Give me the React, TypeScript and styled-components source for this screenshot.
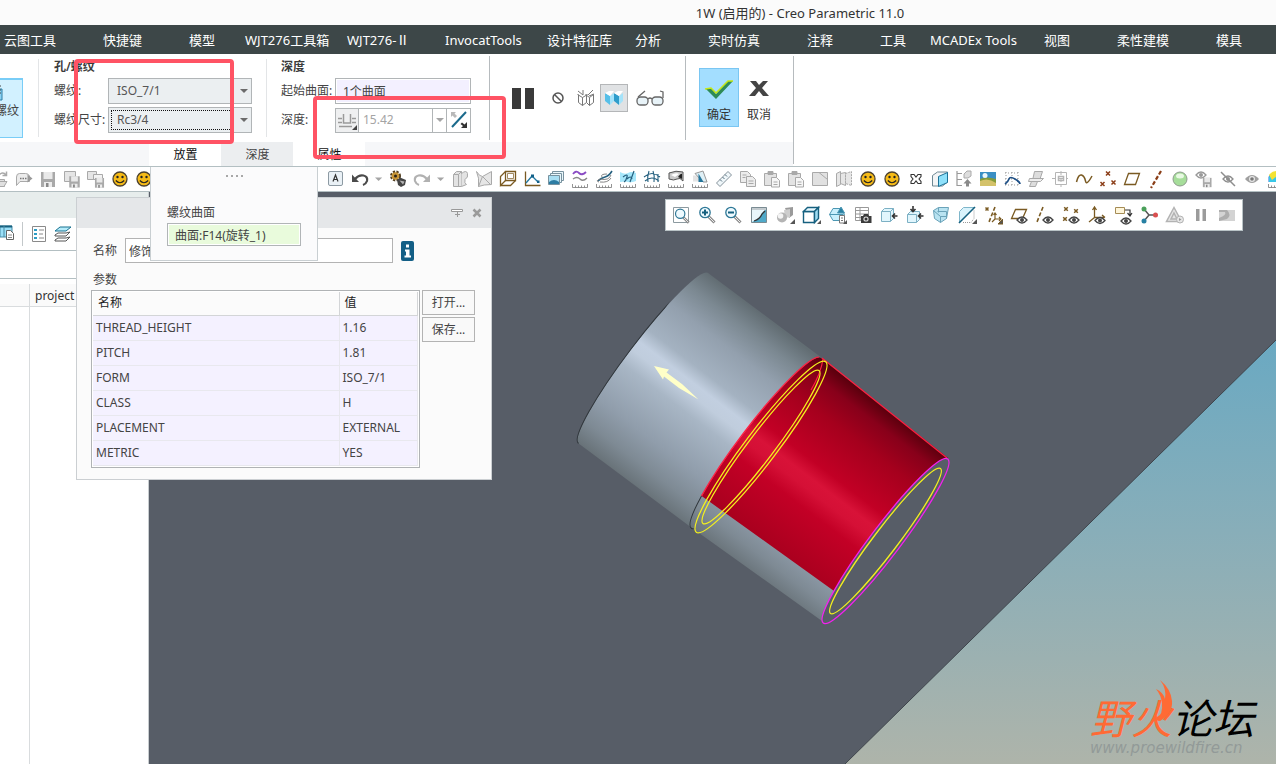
import React from 'react';
import styled, { createGlobalStyle, css } from 'styled-components';

const GlobalStyle = createGlobalStyle`
  * { box-sizing: border-box; }
  body { margin: 0; }
  body, button, input, select, table {
    font-family: 'Noto Sans', 'Noto Sans CJK SC', sans-serif;
    font-size: 12px;
    line-height: 16px;
    color: #444;
  }
  button { padding: 0; border: 0; background: none; cursor: pointer; }
  svg { display: block; flex: none; }
`;

/* ---------- page frame ---------- */

const Page = styled.div`
  position: relative;
  display: flex;
  flex-direction: column;
  min-height: 100vh;
  overflow: hidden;
  background: #fff;
`;

const TitleBar = styled.header`
  height: 25px;
  padding-left: 324px;
  background: #fbfbfb;
  color: #333;
  font-size: 13px;
  line-height: 26px;
  text-align: center;
`;

const MenuBar = styled.nav`
  display: grid;
  grid-template-columns: 99fr 86fr 56fr 102fr 98fr 102fr 88fr 73fr 99fr 73fr 50fr 114fr 73fr 99fr 60fr;
  height: 29px;
  padding-left: 4px;
  background: #3d4748;
`;

const MenuItem = styled.a`
  color: #fff;
  font-size: 13px;
  line-height: 30px;
  text-decoration: none;
  white-space: nowrap;
`;

/* ---------- ribbon ---------- */

const Ribbon = styled.section`
  display: flex;
  border-bottom: 1px solid #b3bfc2;
`;

const RibbonMain = styled.div`
  display: flex;
  flex-direction: column;
`;

const Groups = styled.div`
  display: flex;
  height: 88px;
`;

const Divider = styled.div<{ $soft?: boolean }>`
  width: 1px;
  margin: ${p => (p.$soft ? '5px 0' : '2px 0')};
  background: ${p => (p.$soft ? '#e3e5e7' : '#b6bbbe')};
`;

const ThreadGroup = styled.div`
  width: 38px;
  padding-top: 24px;
`;

const ThreadButton = styled.button`
  display: flex;
  flex-direction: column;
  align-items: flex-end;
  gap: 2px;
  width: 23px;
  height: 60px;
  padding: 5px 3px 0 0;
  overflow: hidden;
  border: 1px solid #79cdf7;
  border-width: 2px 1px 1px 0;
  background: #d2f1ff;
  white-space: nowrap;
  svg { margin-right: 16px; }
`;

const FieldGroup = styled.div<{ $field: number; $left: number; $right: number }>`
  display: grid;
  grid-template-columns: 54px ${p => p.$field}px;
  grid-template-rows: 17px 26px 26px;
  row-gap: 3px;
  align-content: start;
  align-items: center;
  padding: 4px ${p => p.$right}px 0 ${p => p.$left}px;
  white-space: nowrap;
`;

const GroupTitle = styled.h2`
  grid-column: 1 / -1;
  margin: 0;
  font-size: 12px;
  font-weight: 600;
  line-height: 16px;
  color: #3c3c3c;
`;

const SelectBox = styled.div<{ $focused?: boolean }>`
  position: relative;
  height: 26px;
  select {
    width: 100%;
    height: 100%;
    padding: 0 24px 0 8px;
    appearance: none;
    border: 1px solid #b1b5b7;
    border-radius: 0;
    background: #ebeff1;
    color: #555;
  }
  svg { position: absolute; right: 4px; top: 11px; pointer-events: none; }
  &::after {
    content: '';
    position: absolute;
    inset: 3px 18px 3px 3px;
    pointer-events: none;
    border: ${p => (p.$focused ? '1px dotted #111' : '0')};
  }
`;

const PickInput = styled.input<{ $picked?: boolean }>`
  width: 100%;
  height: ${p => (p.$picked ? 23 : 26)}px;
  padding: 0 7px;
  border: 1px solid #b1b5b7;
  border-radius: 0;
  background: ${p => (p.$picked ? '#e9fbdc' : '#f3f0ff')};
  box-shadow: inset 0 0 0 1px #fff;
  outline: 0;
`;

const DepthBox = styled.div`
  display: grid;
  grid-template-columns: 23px 1fr 14px 23px;
  height: 25px;
  border: 1px solid #b1b5b7;
  button, input { border: 0; border-right: 1px solid #b1b5b7; border-radius: 0; }
  button { display: flex; align-items: center; justify-content: center; }
  button:first-child { background: #eff0f1; }
  button:last-child { border-right: 0; }
  input { width: 100%; min-width: 0; padding: 0 4px; background: #fff; color: #a4a4a4; }
`;

const Controls = styled.div`
  display: flex;
  align-items: center;
  padding: 0 21px 0 19px;
`;

const ControlButton = styled.button<{ $on?: boolean; $gap?: number }>`
  display: flex;
  align-items: center;
  justify-content: center;
  width: 28px;
  height: 28px;
  margin-right: ${p => p.$gap ?? 0}px;
  ${p => p.$on && css`border: 1px solid #b4b6b8; background: #e0e2e4;`}
`;

const Confirm = styled.div`
  display: flex;
  padding: 14px 14px 0 13px;
`;

const ConfirmButton = styled.button<{ $primary?: boolean }>`
  display: flex;
  flex-direction: column;
  align-items: center;
  gap: 6px;
  width: 40px;
  height: 59px;
  padding-top: 6px;
  border: 1px solid ${p => (p.$primary ? '#7ac6f2' : 'transparent')};
  background: ${p => (p.$primary ? '#a3deff' : 'transparent')};
  color: #333;
`;

const TabStrip = styled.div`
  display: flex;
  height: 24px;
  padding-left: 149px;
  background: #f6f7f9;
`;

const StripTab = styled.button<{ $shade?: boolean }>`
  width: 72px;
  padding: 2px 0 0 1px;
  background: ${p => (p.$shade ? '#eceef0' : '#fff')};
  color: ${p => (p.$shade ? '#444' : '#111')};
`;

/* ---------- icon rows ---------- */

const ToolRow = styled.div`
  display: flex;
  height: 25px;
  margin-left: -12px;
  overflow: hidden;
  border-bottom: 1px solid #b3bfc2;
`;

const ToolButton = styled.button<{ $w?: number }>`
  display: flex;
  flex: none;
  align-items: center;
  justify-content: center;
  width: ${p => p.$w ?? 24}px;
  height: 24px;
`;

const RowGap = styled.div`
  flex: none;
  width: 168px;
`;

/* ---------- workspace ---------- */

const Workspace = styled.main`
  display: flex;
  flex: 1;
`;

const TreePanel = styled.aside`
  display: flex;
  flex-direction: column;
  width: 149px;
  border-right: 1px solid #c8cdd0;
`;

const TreeHead = styled.div`
  height: 26px;
  background: #e7edec;
`;

const TreeTools = styled.div`
  display: flex;
  align-items: center;
  gap: 6px;
  height: 33px;
  border-bottom: 1px solid #b3bfc2;
`;

const TreeFilter = styled.div`
  height: 28px;
  border-bottom: 1px solid #b3bfc2;
`;

const TreeBody = styled.div`
  display: grid;
  grid-template-columns: 30px 1fr;
  grid-template-rows: 23px 1fr;
  flex: 1;
  margin-top: 5px;
`;

const TreeCell = styled.div<{ $head?: boolean; $line?: boolean }>`
  padding-left: 5px;
  border-right: ${p => (p.$line ? '1px solid #d9dcde' : '0')};
  border-bottom: ${p => (p.$head ? '1px solid #d9dcde' : '0')};
  background: ${p => (p.$head ? '#fafafa' : '#fff')};
  color: #333;
  font-size: 12px;
  line-height: 24px;
`;

const Canvas = styled.section`
  position: relative;
  flex: 1;
  background: #575d67;
`;

const Scene = styled.svg`
  position: absolute;
  inset: 0;
  width: 100%;
  height: 100%;
`;

const FloatBar = styled.div`
  position: absolute;
  top: 7px;
  right: 33px;
  display: flex;
  align-items: center;
  height: 32px;
  padding: 0 2px;
  border: 1px solid #b9c3c6;
  background: #fff;
`;

const Watermark = styled.div`
  position: absolute;
  right: 18px;
  bottom: 8px;
  width: 168px;
`;

const MarkName = styled.div`
  font-family: 'Noto Sans CJK SC', sans-serif;
  font-size: 41px;
  font-style: italic;
  font-weight: 400;
  line-height: 48px;
  color: #000;
  em { color: #ff6a35; }
`;

const MarkSite = styled.div`
  font-family: 'DejaVu Sans', sans-serif;
  font-size: 15px;
  font-style: italic;
  line-height: 16px;
  color: #929a98;
`;

const Flame = styled.svg`
  position: absolute;
  left: 64px;
  top: -13px;
`;

/* ---------- popup and dialog ---------- */

const Popup = styled.div`
  position: absolute;
  left: 150px;
  top: 167px;
  z-index: 3;
  width: 168px;
  height: 94px;
  padding: 0 16px;
  border: 1px solid #c9cfd2;
  border-top: 0;
  background: #fbfbfc;
  label { display: block; line-height: 20px; }
`;

const Grip = styled.div`
  display: flex;
  justify-content: center;
  gap: 3px;
  height: 36px;
  padding-top: 8px;
  i { width: 2px; height: 2px; background: #a8a8a8; }
`;

const Dialog = styled.section`
  position: absolute;
  left: 76px;
  top: 197px;
  z-index: 2;
  width: 416px;
  border: 1px solid #cbcfd2;
  background: #fbfbfb;
`;

const DialogHead = styled.header`
  display: flex;
  justify-content: flex-end;
  align-items: center;
  gap: 7px;
  height: 30px;
  padding-right: 8px;
  background: #e5e7e9;
`;

const DialogBody = styled.div`
  padding: 10px 14px 11px;
`;

const NameRow = styled.div`
  display: flex;
  align-items: center;
  padding-left: 2px;
  label { width: 32px; }
  input { width: 268px; height: 25px; margin-right: 8px; padding: 0 3px; border: 1px solid #b3b3b3; background: #fff; }
`;

const ParamTitle = styled.div`
  padding: 9px 2px 2px;
`;

const ParamArea = styled.div`
  display: flex;
  align-items: flex-start;
  gap: 2px;
`;

const TableFrame = styled.div`
  width: 329px;
  padding: 1px;
  border: 1px solid #b0b3b5;
  background: #fff;
`;

const ParamTable = styled.table`
  width: 100%;
  border-collapse: collapse;
  table-layout: fixed;
  th, td { height: 25px; padding: 0 3px; text-align: left; font-weight: 400; border-right: 1px solid #e8e8ee; border-bottom: 1px solid #e8e8ee; }
  th { height: 23px; padding: 0 5px; background: #fbfbfb; color: #222; border-color: #d3d5d7; }
  td { background: #f4f1ff; }
  th:first-child { width: 246px; }
`;

const SideButtons = styled.div`
  display: flex;
  flex-direction: column;
  gap: 2px;
`;

const SideButton = styled.button`
  width: 53px;
  height: 25px;
  border: 1px solid #b3b3b3;
  background: #f9f9f9;
`;

const Highlight = styled.div<{ $x: number; $y: number; $w: number; $h: number }>`
  position: absolute;
  left: ${p => p.$x}px;
  top: ${p => p.$y}px;
  z-index: 4;
  width: ${p => p.$w}px;
  height: ${p => p.$h}px;
  border: 4px solid #ff5364;
  border-radius: 4px;
  pointer-events: none;
`;

/* ---------- icon drawings ---------- */

const G = '#a9a9a9';
const BR = '#7a5a22';
const BL = '#16607f';

const Eye = ({ x = 11, y = 15, c = '#444' }) => (
  <g>
    <path d={`M${x - 5} ${y}q5 -6 10 0q-5 6 -10 0z`} fill="#fff" stroke={c} strokeWidth="1.3" />
    <circle cx={x} cy={y} r="2" fill={c} />
  </g>
);
const Ruler = () => <path d="M2.500 15v3.500h15V15M5.500 16.500v2M8.500 16.500v2M11.500 16.500v2M14.500 16.500v2" fill="none" stroke="#777" strokeWidth=".8" />;
const Caret = ({ c = '#8a8a8a' }) => <path d="M5 8h9l-4.500 4.500z" fill={c} />;
const Corner = () => <path d="M20 14v5h-5z" fill="#555" />;
const Floppy = ({ x = 0, y = 0, s = 1 }) => (
  <g transform={`translate(${x} ${y}) scale(${s})`}>
    <path d="M3 3h14v15H3z" fill={G} />
    <path d="M5.500 3h9v7h-9z" fill="#e9e9e9" />
    <path d="M6 13h8v5H6z" fill="#ececec" />
    <path d="M8 14h2.500v4H8z" fill="#888" />
  </g>
);
const Smile = (
  <g>
    <circle cx="10" cy="10" r="7" fill="#f6bb17" stroke="#4b4130" strokeWidth="1.300" />
    <circle cx="7.500" cy="8" r="1.200" fill="#222" />
    <circle cx="12.500" cy="8" r="1.200" fill="#222" />
    <path d="M5.800 11.500q4.200 4.500 8.400 0" fill="none" stroke="#222" strokeWidth="1.200" />
  </g>
);
const Sheet = (
  <g fill="#ececec" stroke={G}>
    <path d="M2.500 2.500h7l3 3v8h-10z" />
    <path d="M8.500 7.500h6l3 3v7h-9z" />
    <path d="M4.500 6h4M4.500 8.500h3M10.500 12h5M10.500 14.500h5" />
  </g>
);
const Clip = (
  <g fill="#e3e3e3" stroke={G}>
    <path d="M2.500 4.500h12v12h-12z" />
    <path d="M6 2.500h5v3H6z" fill={G} />
    <path d="M9.500 8.500h5l3 3v6.500h-8z" fill="#f6f6f6" />
    <path d="M11.500 13h4M11.500 15.500h4" />
  </g>
);
const Lens = ({ plus = false, minus = false }) => (
  <g fill="none">
    <path d="M11.500 11.500l6 6" stroke="#8b8b8b" strokeWidth="3" />
    <path d="M12 12l5 5" stroke="#eee" />
    <circle cx="8" cy="7.500" r="5.200" fill="#eefaff" stroke="#2d7796" strokeWidth="1.300" />
    {(plus || minus) && <path d="M5 7.500h6" stroke={BL} strokeWidth="2" />}
    {plus && <path d="M8 4.500v6" stroke={BL} strokeWidth="2" />}
  </g>
);
const Cross = ({ x, y, c = '#8b3d17', r = 2 }: { x: number; y: number; c?: string; r?: number }) => (
  <path d={`M${x - r} ${y - r}l${2 * r} ${2 * r}M${x + r} ${y - r}l${-2 * r} ${2 * r}`} stroke={c} strokeWidth="1.500" />
);

const icons: Record<string, React.ReactNode> = {
  open: <g fill="#e0e0e0" stroke={G}><path d="M1.500 17.500v-9h5l2 2h6v7z" /><path d="M2 17.500l3-5h12l-3 5z" /><path d="M9 6q4-4 7 0M16.500 2.500v4h-4" fill="none" strokeWidth="1.500" /></g>,
  send: <g fill="#ececec" stroke={G}><path d="M2.500 16.500V8q0-3.500 3-3.500h6q3 0 4 2.500v5.500h-9.500z" /><path d="M6 9.500h7" stroke="#777" strokeWidth="1.600" strokeDasharray="1.500 1" /><path d="M13.500 5.500l5 4-5 4z" fill="#999" stroke="none" /></g>,
  save: <Floppy />,
  saveAs: <g><path d="M2.500 2.500h11v10h-11z" fill="#e5e5e5" stroke={G} /><Floppy x={5} y={5} s={0.75} /></g>,
  saveCopy: <g><path d="M1.500 2.500h9v8h-9z" fill="#e5e5e5" stroke={G} /><path d="M7.500 5.500h9v5h-9z" fill="#f3f3f3" stroke={G} /><Floppy x={7} y={7} s={0.65} /></g>,
  smile: Smile,
  letter: <g><rect x="2.500" y="2.500" width="14" height="14" rx="1.500" fill="#eaf1f6" stroke="#8d9aa3" /><path d="M7 12.500l2.500-6.500 2.500 6.500M8 10.500h3" fill="none" stroke="#333" strokeWidth="1.200" /></g>,
  undo: <g><path d="M5 10Q9 5.500 13.500 6.500t3.500 5.500q-1 3-4 4" fill="none" stroke="#4b4b4b" strokeWidth="2.200" /><path d="M2 5.500V13h7z" fill="#4b4b4b" /></g>,
  redo: <g transform="matrix(-1 0 0 1 20 0)"><path d="M5 10Q9 5.500 13.500 6.500t3.500 5.500q-1 3-4 4" fill="none" stroke="#b1b1b1" strokeWidth="2.200" /><path d="M2 5.500V13h7z" fill="#b1b1b1" /></g>,
  caret: <Caret c="#a5a5a5" />,
  gears: <g><circle cx="7.500" cy="7" r="4" fill="none" stroke="#503c1d" strokeWidth="3" strokeDasharray="2 1.200" /><circle cx="7.500" cy="7" r="3.800" fill="#c89536" /><circle cx="7.500" cy="7" r="1.500" fill="#2d2417" /><path d="M9 11l3-2.500 6 2.500-1 5-4 2-3-2z" fill="#444" /><path d="M11.500 11.500l5 1-1.500 3z" fill="#b5b5b5" /></g>,
  block: <g fill="#e3e3e3" stroke={G}><path d="M3.500 5.500l3-3h5v15h-8z" /><path d="M3.500 5.500h5v12M8.500 5.500l3-3" /><path d="M11.500 4.500q5-4 6 0t-2.500 6q-1 4 1.500 5l-5 2" /></g>,
  sheetCut: <g fill="#e6e6e6" stroke={G}><path d="M2.500 2.500q3 5 6 5l9-5v13q-8 0-13 2 1-9-2-15z" /><path d="M4.500 17.500l4-10 8 8" fill="none" /></g>,
  frame: <g fill="none" stroke={BR} strokeWidth="1.300"><path d="M7.500 2.500h10v9h-10z" /><path d="M7.500 2.500l-5 5v9l5-5M2.500 16.500h10l5-5" /><path d="M9.500 4.500h6v5h-6z" strokeWidth=".7" /></g>,
  graph: <g fill="none"><path d="M3.500 2.500v14h15" stroke={BR} strokeWidth="1.300" /><path d="M4 14l6-7 6 6" stroke="#2277a0" strokeWidth="1.300" /><path d="M9 5.500h3v3H9zM15 11.500h2.500V14H15z" fill="#126189" /></g>,
  images: <g stroke="#78929f"><path d="M6.500 2.500h11v9h-11z" fill="#eaf7fb" /><path d="M4.500 4.500h11v9h-11z" fill="#eaf7fb" /><path d="M2.500 6.500h11v9h-11z" fill="#a8dff3" /><path d="M3 13q5-4 10 0v2H3z" fill="#2d7ca3" stroke="none" /></g>,
  waves: <g fill="none"><path d="M3 5q3-4 6-1t7-1" stroke="#8a4cc4" strokeWidth="1.800" /><path d="M3 10q4-3 7 0t7-1" stroke="#888" strokeWidth="1.300" /><Ruler /></g>,
  curveA: <g fill="none"><path d="M4 12q3-3 7-4t7-6" stroke="#25607f" strokeWidth="1.600" /><path d="M5 13q-4-1 1-3 9 2 11-4M8 8q-2-3 5-3M6 13q8 1 11-4" stroke="#777" strokeWidth=".9" /><Ruler /></g>,
  curveB: <g fill="none"><path d="M2 3q5 3 8 1t8 0v8q-5 2-8 1t-8 0z" fill="#a6e7fb" /><path d="M5 8q5-4 4 0t-3 5M9 10q4-4 5 0M12 13l4-11" stroke="#25607f" strokeWidth="1.200" /><Ruler /></g>,
  grid: <g fill="none" stroke="#25607f" strokeWidth="1.100"><path d="M2 8q8-7 16 0M3 12q7-6 14 0M7 2q-2 6-1 11M11 2q2 5 1 11M16 5v8" /><Ruler /></g>,
  shade: <g><path d="M3 4q7-3 14-1v9q-3-4-6-2t-8 0z" fill="#c9c9c9" stroke="#555" /><path d="M5 6q5-3 8-1l-4 3z" fill="#fff" /><path d="M12 8q3-4 4-3v5z" fill="#222" /><Ruler /></g>,
  prism: <g><path d="M3 6.500h7v6H3z" fill="#e3e3e3" /><path d="M5 4.500l8-2.500 4 11h-4z" fill="#dff0f6" stroke="#999" /><path d="M8.500 13V4.500L13.500 13z" fill="#24749a" /><Ruler /></g>,
  ruler: <g><path d="M2.500 14L14 2.500l3.500 3.500L6 17.500z" fill="#f0f7fa" stroke="#84919a" /><path d="M6 10.500l2 2M8.500 8l2 2M11 5.500l2 2" stroke="#56707f" /></g>,
  copy: Sheet,
  paste: Clip,
  pasteSp: Clip,
  square: <g><path d="M2.500 3.500h15v13h-15z" fill="#e1e1e1" stroke={G} /><path d="M9 3.500l8.500 7" stroke={G} /></g>,
  pages: <g fill="#e6e6e6" stroke={G}><path d="M2.500 4.500l4-2v13l-4 2z" /><path d="M6.500 4.500l5-1v13l-5-2z" /><path d="M11.500 4.500l6-2v14l-6-2z" strokeDasharray="2 1" /></g>,
  xx: <path d="M5 5.500h3l2 2.500 2-2.500h3v2l-2 2.500 2 2.500v2h-3l-2-2.500-2 2.500H5v-2L7 10 5 7.500z" fill="#fff" stroke="#333" strokeWidth="1.100" />,
  slab: <g stroke="#6e8894"><path d="M2.500 6.500l5-3.500h10v10l-5 4h-10z" fill="#f3f5f6" /><path d="M8.500 7.500l9-4v10l-9 4z" fill="#8fe1fb" stroke="#1d7298" /></g>,
  tree: <g><path d="M3 2v15M3 4.500h5M3 10.500h5M3 16.500h5" stroke="#999" strokeWidth="1.200" /><path d="M10 5l3-3h4v5l-3 2h-4z" fill="#ddd" stroke="#aaa" /><path d="M13.500 10l4 4.500h-2.500v3h-3v-3H9.500z" fill="#8a8a8a" /></g>,
  photo: <g><path d="M2 3h16v14H2z" fill="#3a8fc4" /><path d="M2 10q6-3 16 0v7H2z" fill="#849b3a" /><path d="M2 12q8-4 16 2v3H2z" fill="#d4c26a" /><circle cx="7" cy="6.500" r="2.500" fill="#eaf6fb" /></g>,
  spline: <g fill="none"><path d="M3 4h14M3 10h14M3 16h14M4 3v14M10 3v14M16 3v14" stroke="#999" strokeDasharray="1 2" /><path d="M3 15q3-2 4-5t6 0 5 5" stroke="#1d4f86" strokeWidth="1.700" /></g>,
  stack: <g fill="#ddd" stroke={G}><path d="M8.500 2.500h8l-3 9h-7z" /><path d="M3.500 9.500h14l-3 3h-12z" fill="#eee" /><path d="M5.500 12.500h6l-2 5h-6z" /></g>,
  crop: <g fill="none" stroke="#b5b5b5"><path d="M5.500 3.500h11v12h-11z" /><path d="M8.500 7.500h5v4h-5z" strokeWidth="1.500" /><path d="M2 9.500h16M11 2v16" strokeDasharray="4 3" /></g>,
  sine: <path d="M2.500 13q2-8 5-7t4 6 6.500-5" fill="none" stroke={BR} strokeWidth="1.500" />,
  points: <g fill="none"><Cross x={10} y={4.5} /><Cross x={4.5} y={15} /><Cross x={15.5} y={13.5} /></g>,
  plane: <path d="M6.500 4.500h11l-4 11h-11z" fill="none" stroke={BR} strokeWidth="1.300" />,
  axis: <path d="M15 2L5 19" stroke="#8a3d16" strokeWidth="2.200" strokeDasharray="4 2" />,
  ball: <g><circle cx="10" cy="10" r="7" fill="#a6dd9a" stroke="#8e9b8d" /><ellipse cx="10" cy="7" rx="4" ry="2.500" fill="#e8f9e3" /></g>,
  eyeSave: <g><Eye x={7} y={6} c="#999" /><Floppy x={7} y={7} s={0.62} /></g>,
  eyeOff: <g><Eye x={10} y={10} c="#8e8e8e" /><path d="M3 3l14 14" stroke="#8e8e8e" strokeWidth="1.500" /></g>,
  eye: <g><path d="M3 10q7-8 14 0-7 8-14 0z" fill="#a0a0a0" /><circle cx="10" cy="10" r="3" fill="#e6e6e6" /><circle cx="10" cy="10" r="1.800" fill="#777" /></g>,
  rainbow: <g><path d="M2.500 13V8q2-6 14-5v10z" fill="#2b6fe0" /><path d="M3 13V8q3-5 8-5v10z" fill="#39c8e8" /><path d="M3 6q3-4 8-4l1 4-6 5z" fill="#f3e233" /><Ruler /></g>,

  zoomFit: <g><path d="M2.500 2.500h15v15h-15z" fill="#fff" stroke="#8c9aa0" /><g transform="translate(2 2) scale(.9)"><Lens /></g></g>,
  zoomIn: <Lens plus />,
  zoomOut: <Lens minus />,
  repaint: <g><path d="M2.500 2.500h15v15h-15z" fill="#4fa9c9" stroke="#7a8b92" /><path d="M3 5h13l-3 3q-2 6-10 9z" fill="#e8f6fb" /><path d="M3 3h14v2H3z" fill="#c3cbcf" /><path d="M16 6l-3 3q-2 5-8 7" fill="none" stroke="#333" strokeWidth="1.300" /></g>,
  render: <g><path d="M10 3l8-1v8l-4 3z" fill="#9a9a9a" /><path d="M9 5l6-1v8l-5 1z" fill="#cdcdcd" /><circle cx="7" cy="12.500" r="5" fill="#b4b4b4" /><circle cx="5.500" cy="11" r="2.800" fill="#f4f4f4" /><Corner /></g>,
  cube: <g stroke={BL} strokeWidth="1.400"><path d="M2.500 6.500h11v11h-11z" fill="#fff" /><path d="M2.500 6.500l4-4h11l-4 4z" fill="#e7f8ff" /><path d="M13.500 6.500l4-4v11l-4 4z" fill="#9fdcf2" /><path d="M20 15v4h-4z" fill="#555" stroke="none" /></g>,
  views: <g stroke="#4c97b3"><path d="M2.500 9.500l3.500-6h8l3.500 6-3.500 6H6z" fill="#c9effc" /><path d="M2.500 9.500h14" /><path d="M10.500 8L14 2l3.500 6z" fill="#2780a3" /><path d="M12.500 10.500h5v7.500h-5z" fill="#fff" stroke="#777" /><path d="M14 13h2M14 15.500h2" stroke="#777" /><path d="M20 15v4h-4z" fill="#555" stroke="none" /></g>,
  table: <g><path d="M2.500 2.500h13v13h-13zM2.500 5.500h13M2.500 9h13M2.500 12.500h13M7 2.500v13" fill="#fff" stroke="#999" /><path d="M8 11h2l1-2h4l1 2h2.500v7H8z" fill="#3b3b3b" /><circle cx="13" cy="14" r="2.600" fill="#ddd" /><circle cx="13" cy="14" r="1.500" fill="#333" /></g>,
  cubeIn: <g><path d="M2.500 6.500l3-3h9v10l-3 3h-9z" fill="#e1f6fd" stroke="#7cb0c4" /><path d="M2.500 6.500h9v10M11.500 6.500l3-3" fill="none" stroke="#7cb0c4" /><path d="M18.500 11H14M16 8.500L13.500 11l2.500 2.500" stroke="#333" strokeWidth="1.600" fill="none" /></g>,
  cubeIn2: <g><path d="M2.500 9.500l3-3h9v8l-3 3h-9z" fill="#e1f6fd" stroke="#7cb0c4" /><path d="M2.500 9.500h9v8" fill="none" stroke="#7cb0c4" /><path d="M18.500 11H14M16 8.500L13.500 11l2.500 2.500M8 1v5M5.500 4L8 6.500 10.500 4" stroke="#333" strokeWidth="1.600" fill="none" /></g>,
  persp: <g stroke="#6ba3b9"><path d="M2.500 5.500l5-3h10l-2 11-6 4-6-4z" fill="#b9e3f1" /><path d="M6.500 6.500h9v7M9.500 17.500v-6h6M2.500 5.500l7 6M7.500 2.500v5" fill="none" /></g>,
  section: <g><path d="M2.500 6.500l4-4h11l-15 15z" fill="#d9f3fc" stroke="#7fb6ca" /><path d="M6 17.500h8l3-4v-9" fill="none" stroke="#999" strokeDasharray="1 1" /><path d="M2 18L18 2" stroke={BL} strokeWidth="1.600" /><Corner /></g>,
  datum: <g fill="none" stroke={BR}><Cross x={4} y={4} c={BR} r={1.5} /><path d="M12 2L6 17" strokeWidth="1.600" strokeDasharray="4 2" /><path d="M12 8v6h6M12 14l-3 3M10.500 10L12 8l1.500 2M16 12l2 2-2 2" strokeWidth="1.200" /><Corner /></g>,
  planeEye: <g><path d="M6.500 4.500h11l-4 9h-11z" fill="none" stroke={BR} strokeWidth="1.300" /><Eye x={13} y={15} /></g>,
  axisEye: <g><path d="M8 2L2 17" stroke={BR} strokeWidth="1.600" strokeDasharray="4 2" /><Eye x={13} y={15} /></g>,
  pointsEye: <g><Cross x={5} y={4} c={BR} r={1.8} /><Cross x={15} y={6} c={BR} r={1.8} /><Cross x={4} y={14} c={BR} r={1.8} /><Eye x={13} y={15} /></g>,
  csysEye: <g><path d="M7.500 2.500v10h10M7.500 12.500L2 17M5.500 5l2-3 2 3M15 10l3 2.500" fill="none" stroke={BR} strokeWidth="1.300" /><Eye x={13} y={15.5} /></g>,
  noteEye: <g><path d="M2.500 2.500h9v6h-9z" fill="#fff6da" stroke="#a58c56" /><path d="M12 5h5v5m-2.500-2l2.500 3 2-3" fill="none" stroke="#333" strokeWidth="1.200" /><Eye x={13} y={16} /></g>,
  nodes: <g><path d="M5 4l5 6-5 6M10 10h7" stroke="#555" strokeWidth="1.500" fill="none" /><circle cx="5" cy="4" r="2.500" fill="#4aa05a" /><circle cx="5" cy="16" r="2.500" fill="#2780a3" /><circle cx="16.500" cy="10" r="2.500" fill="#d95050" /></g>,
  warn: <g fill="#e6e6e6" stroke="#b3b3b3" strokeWidth="1.500"><path d="M9 2.500l7.500 14h-15z" /><path d="M9 8l3 6H6z" /><circle cx="15" cy="14.500" r="3.500" strokeWidth="1" /><path d="M14 13v3l2.500-1.500z" fill="#999" stroke="none" /></g>,
  pause: <path d="M5 4h3.500v12H5zM11.500 4H15v12h-3.500z" fill="#9b9b9b" />,
  film: <g><path d="M2 5h16v11H2z" fill="#d3d3d3" /><path d="M2 5h8q5 5 0 9l-8 2v-3q8-3 6-6H2z" fill="#adadad" /></g>,
};

const Icon = ({ name, size = 20 }: { name: string; size?: number }) => (
  <svg width={size} height={size} viewBox="0 0 20 20" aria-hidden="true">{icons[name]}</svg>
);

/* ---------- data ---------- */

const menus = ['云图工具', '快捷键', '模型', 'WJT276工具箱', 'WJT276-Ⅱ', 'InvocatTools', '设计特征库', '分析', '实时仿真', '注释', '工具', 'MCADEx Tools', '视图', '柔性建模', '模具'];

const fileTools = ['open', 'send', 'save', 'saveAs', 'saveCopy', 'smile', 'smile'];
const editTools = ['letter', 'undo', 'caret', 'gears', 'redo', 'caret', 'block', 'sheetCut', 'frame', 'graph', 'images', 'waves', 'curveA', 'curveB', 'grid', 'shade', 'prism', 'ruler', 'copy', 'paste', 'pasteSp', 'square', 'pages', 'smile', 'smile', 'xx', 'slab', 'tree', 'photo', 'spline', 'stack', 'crop', 'sine', 'points', 'plane', 'axis', 'ball', 'eyeSave', 'eyeOff', 'eye', 'rainbow'];
const viewTools = ['zoomFit', 'zoomIn', 'zoomOut', 'repaint', 'render', 'cube', 'views', 'table', 'cubeIn', 'cubeIn2', 'persp', 'section', 'datum', 'planeEye', 'axisEye', 'pointsEye', 'csysEye', 'noteEye', 'nodes', 'warn', 'pause', 'film'];

const params = [
  ['THREAD_HEIGHT', '1.16'],
  ['PITCH', '1.81'],
  ['FORM', 'ISO_7/1'],
  ['CLASS', 'H'],
  ['PLACEMENT', 'EXTERNAL'],
  ['METRIC', 'YES'],
];

const Down = ({ c = '#6b6b6b' }) => <svg width="8" height="5" viewBox="0 0 8 5" aria-hidden="true"><path d="M0 0h8L4 4z" fill={c} /></svg>;

const Model = () => (
  <Scene viewBox="149 192 1127 572" preserveAspectRatio="xMinYMin slice" role="img" aria-label="model">
    <defs>
      <linearGradient id="sky" gradientUnits="userSpaceOnUse" x1="0" y1="340" x2="0" y2="764">
        <stop offset="0" stopColor="#6aa9c2" />
        <stop offset=".45" stopColor="#88aeb9" />
        <stop offset=".75" stopColor="#9cb1b1" />
        <stop offset="1" stopColor="#aeb4aa" />
      </linearGradient>
      <linearGradient id="steel" gradientUnits="userSpaceOnUse" x1="708" y1="273" x2="578" y2="443">
        <stop offset="0" stopColor="#626d73" />
        <stop offset=".1" stopColor="#7b8891" />
        <stop offset=".22" stopColor="#93a0ae" />
        <stop offset=".38" stopColor="#a4b2c1" />
        <stop offset=".45" stopColor="#c2cfe0" />
        <stop offset=".5" stopColor="#c0cddd" />
        <stop offset=".58" stopColor="#a8b6c5" />
        <stop offset=".78" stopColor="#909dab" />
        <stop offset=".9" stopColor="#7e8a94" />
        <stop offset="1" stopColor="#687278" />
      </linearGradient>
      <linearGradient id="crimson" gradientUnits="userSpaceOnUse" x1="708" y1="273" x2="578" y2="443">
        <stop offset="0" stopColor="#5a000d" />
        <stop offset=".08" stopColor="#88001a" />
        <stop offset=".2" stopColor="#a5001d" />
        <stop offset=".4" stopColor="#c20025" />
        <stop offset=".47" stopColor="#d81238" />
        <stop offset=".52" stopColor="#d51036" />
        <stop offset=".6" stopColor="#c30026" />
        <stop offset=".85" stopColor="#a8001e" />
        <stop offset="1" stopColor="#8a0018" />
      </linearGradient>
      <clipPath id="redZone"><path d="M640 300h360v410L834 591 703 497l-63-45z" /></clipPath>
      <clipPath id="leftCap"><path d="M550 240h159L579 443l-29 30z" /></clipPath>
      <clipPath id="seamRed"><path d="M640 300h185v50L703 497l-63-45z" /></clipPath>
      <clipPath id="seamDark"><path d="M703 497l-63-45v100l54-22z" /></clipPath>
    </defs>
    <path d="M1276 340L845 764h431z" fill="url(#sky)" />
    <path d="M1276 340L845 764" stroke="#3f454c" />

    <path d="M707.700 272.800A107 15 -52.800 0 0 578.300 443.200L692 528 822 621 948 459 822 358z" fill="url(#steel)" />
    <g clipPath="url(#leftCap)"><ellipse cx="643" cy="358" rx="107" ry="15" transform="rotate(-52.800 643 358)" fill="none" stroke="#30363b" /></g>

    <g clipPath="url(#redZone)">
      <path d="M820.700 357.800A107 16 -52.800 0 0 691.300 528.200L823 622 948 458z" fill="url(#crimson)" />
    </g>
    <g clipPath="url(#seamRed)"><ellipse cx="756" cy="443" rx="107" ry="16" transform="rotate(-52.800 756 443)" fill="none" stroke="#ff1f40" strokeWidth="1.300" /></g>
    <g clipPath="url(#seamDark)"><ellipse cx="756" cy="443" rx="107" ry="16" transform="rotate(-52.800 756 443)" fill="none" stroke="#30363b" /></g>
    <path d="M822 358l125 100M823 359q-2 14-12 31" fill="none" stroke="#ff1f40" strokeWidth="1.200" />

    <ellipse cx="885.500" cy="541" rx="103" ry="15" transform="rotate(-52.800 885.500 541)" fill="#575d67" stroke="#f420f0" strokeWidth="1.300" />
    <g fill="none" stroke="#f4f01e" strokeWidth="1.300">
      <ellipse cx="885.500" cy="541" rx="91" ry="12" transform="rotate(-52.800 885.500 541)" />
      <ellipse cx="761" cy="447" rx="107" ry="16" transform="rotate(-52.800 761 447)" />
      <ellipse cx="761" cy="447" rx="96" ry="13" transform="rotate(-52.800 761 447)" />
    </g>
    <path d="M654 366L669 369.500 666.500 372.500 682 384 698.500 399.500 679 388 664 376.500 663 379.500z" fill="#ffffc8" />
  </Scene>
);

export default function App() {
  return (
    <Page>
      <GlobalStyle />
      <TitleBar>1W (启用的) - Creo Parametric 11.0</TitleBar>
      <MenuBar>{menus.map(m => <MenuItem key={m} href="#">{m}</MenuItem>)}</MenuBar>

      <Ribbon>
        <RibbonMain>
          <Groups>
            <ThreadGroup>
              <ThreadButton>
                <svg width="4" height="16" viewBox="0 0 4 16"><path d="M0 4h3v11H0z" fill="#8bd3f5" stroke="#2c7fa5" /><path d="M0 1h2M0 5h2M0 8h2" stroke="#444" /></svg>
                <span>螺纹</span>
              </ThreadButton>
            </ThreadGroup>
            <Divider $soft />
            <FieldGroup $field={144} $left={15} $right={14}>
              <GroupTitle>孔/螺纹</GroupTitle>
              <label htmlFor="thread">螺纹:</label>
              <SelectBox><select id="thread"><option>ISO_7/1</option></select><Down /></SelectBox>
              <label htmlFor="size">螺纹尺寸:</label>
              <SelectBox $focused><select id="size"><option>Rc3/4</option></select><Down /></SelectBox>
            </FieldGroup>
            <Divider $soft />
            <FieldGroup $field={136} $left={14} $right={18}>
              <GroupTitle>深度</GroupTitle>
              <label htmlFor="start">起始曲面:</label>
              <PickInput id="start" defaultValue="1个曲面" />
              <label htmlFor="depth">深度:</label>
              <DepthBox>
                <button aria-label="深度类型">
                  <svg width="20" height="20" viewBox="0 0 20 20"><path d="M6.500 4v9h7V4M1 8.500h4M15 8.500h4M1 12.500h4M15 12.500h4M2 16.500h13" fill="none" stroke="#9a9a9a" strokeWidth="1.500" /><path d="M20 15v5h-5z" fill="#444" /></svg>
                </button>
                <input id="depth" defaultValue="15.42" />
                <button aria-label="深度值"><Down c="#a5a5a5" /></button>
                <button aria-label="反向">
                  <svg width="20" height="20" viewBox="0 0 20 20"><path d="M3 17L17 2" stroke="#1b6a8c" strokeWidth="2" /><path d="M2 2h5L5.500 3.500 8 6 6 8 3.500 5.500 2 7z" fill="#b9b9b9" /><path d="M18 18h-6l2-2-2.500-2 1.500-1.500 2.500 2L18 12z" fill="#333" /></svg>
                </button>
              </DepthBox>
            </FieldGroup>
            <Divider />
            <Controls>
              <ControlButton $gap={7} aria-label="暂停"><svg width="22" height="21" viewBox="0 0 22 21"><path d="M0 0h9v21H0zM13 0h9v21h-9z" fill="#3a3a3a" /></svg></ControlButton>
              <ControlButton aria-label="无预览"><svg width="14" height="14" viewBox="0 0 14 14"><circle cx="7" cy="7" r="5" fill="none" stroke="#555" strokeWidth="1.500" /><path d="M3.500 3.500l7 7" stroke="#555" strokeWidth="1.500" /></svg></ControlButton>
              <ControlButton aria-label="分离"><svg width="20" height="20" viewBox="0 0 20 20"><path d="M1.500 6.500l5 3 5-3M6.500 9.500v8l-4-3v-8M6.500 17.500l4-3v-8M9.500 6.500l4 3 4-3M13.500 9.500v8l4-3v-8M13.500 17.500l-3-3M2 3l5 4M7 2v5M12 7l5-5M18 6l-5 2" fill="none" stroke="#777" /></svg></ControlButton>
              <ControlButton $on $gap={8} aria-label="连接"><svg width="20" height="16" viewBox="0 0 20 16"><path d="M1 3l5 3v9l-5-4z" fill="#56bfe8" /><path d="M6 6l4-3v8l-4 4zM15 6l4-3v8l-4 4z" fill="#a4e3fa" /><path d="M10 3l5 3v9l-5-4z" fill="#2f9dcb" /><path d="M1 3l4-2h5l-4 5zM10 3l4-2h5l-4 5z" fill="#fff" /></svg></ControlButton>
              <ControlButton aria-label="特征预览"><svg width="28" height="18" viewBox="0 0 28 18"><rect x="1" y="8" width="11" height="8" rx="3.500" fill="#e8f3f8" stroke="#666" strokeWidth="1.300" /><rect x="16" y="8" width="11" height="8" rx="3.500" fill="#e8f3f8" stroke="#666" strokeWidth="1.300" /><path d="M12 10q2-2 4 0M2 8l7-6M27 9V3l-3-1" fill="none" stroke="#666" strokeWidth="1.300" /></svg></ControlButton>
            </Controls>
            <Divider />
            <Confirm>
              <ConfirmButton $primary><svg width="30" height="26" viewBox="0 0 30 26"><path d="M2 14l5-1 5 6L24 6h5L12 24z" fill="#2e8b57" /><path d="M1 14l6-1 5 5L24 6h5" fill="none" stroke="#c5e815" strokeWidth="1.500" /></svg>确定</ConfirmButton>
              <ConfirmButton><svg width="20" height="26" viewBox="0 0 20 26"><path d="M1 6h6l3 4 4-4h5l-6 7 7 8h-6l-4-5-4 5H0l7-8z" fill="#444" /></svg>取消</ConfirmButton>
            </Confirm>
          </Groups>
          <TabStrip>
            <StripTab>放置</StripTab>
            <StripTab $shade>深度</StripTab>
            <StripTab>属性</StripTab>
          </TabStrip>
        </RibbonMain>
        <Divider />
      </Ribbon>

      <ToolRow>
        {fileTools.map((n, i) => <ToolButton key={i} aria-label={n}><Icon name={n} /></ToolButton>)}
        <RowGap />
        {editTools.map((n, i) => <ToolButton key={i} aria-label={n} $w={n === 'caret' ? 14 : 24}><Icon name={n} size={n === 'caret' ? 16 : 20} /></ToolButton>)}
      </ToolRow>

      <Workspace>
        <TreePanel>
          <TreeHead />
          <TreeTools>
            <svg width="24" height="24" viewBox="0 0 24 24"><path d="M0 4h12v11H0z" fill="#9be0f8" stroke="#4b8ba5" /><path d="M0 4.500h12" stroke="#16607f" strokeWidth="2" /><path d="M4 4v11" stroke="#4b8ba5" /><path d="M6.500 8.500h4l3 3v6h-7z" fill="#fff" stroke="#666" /><path d="M8 13h4M8 15.500h4" stroke="#888" /><path d="M22.500 0v24" stroke="#c3c8ca" /></svg>
            <svg width="18" height="18" viewBox="0 0 18 18"><path d="M2.500 1.500h13v15h-13z" fill="#fff" stroke="#8a8a8a" /><path d="M4 4h3v2H4zM4 8h3v2H4zM4 12h3v2H4z" fill="#2d9cc4" /><path d="M9 5h5M9 9h4M9 13h5" stroke="#888" /></svg>
            <svg width="18" height="18" viewBox="0 0 18 18"><path d="M1 6l5-4h11l-5 4z" fill="#b6ecfb" stroke="#16708f" /><path d="M1 10l3-2h8l4-1-4 4H1zM1 15l3-2h8l4-1-4 4H1z" fill="#fff" stroke="#555" /></svg>
          </TreeTools>
          <TreeFilter />
          <TreeBody>
            <TreeCell $head $line />
            <TreeCell $head>project</TreeCell>
            <TreeCell $line />
            <TreeCell />
          </TreeBody>
        </TreePanel>
        <Canvas>
          <Model />
          <FloatBar>
            {viewTools.map(n => <ToolButton key={n} $w={26} aria-label={n}><Icon name={n} /></ToolButton>)}
          </FloatBar>
          <Watermark>
            <MarkName><em>野火</em><span>论坛</span></MarkName>
            <MarkSite>www.proewildfire.cn</MarkSite>
            <Flame width="20" height="46" viewBox="0 0 20 46" aria-hidden="true">
              <path d="M6 1Q17 10 18 22T6 42Q1 42 3 38 9 36 8 24 7 16 2 10 9 13 11 20 13 10 6 1z" fill="#ff6a35" />
            </Flame>
          </Watermark>
        </Canvas>
      </Workspace>

      <Popup>
        <Grip><i /><i /><i /><i /></Grip>
        <label htmlFor="surface">螺纹曲面</label>
        <PickInput id="surface" $picked defaultValue="曲面:F14(旋转_1)" />
      </Popup>

      <Dialog>
        <DialogHead>
          <button aria-label="固定"><svg width="14" height="12" viewBox="0 0 14 12"><path d="M1.500 2.500h11v2h-11z" fill="#fff" stroke="#999" /><path d="M7.500 5v5M5 7.500h5" stroke="#999" /></svg></button>
          <button aria-label="关闭"><svg width="12" height="12" viewBox="0 0 12 12"><path d="M2.500 2.500l7 7M9.500 2.500l-7 7" stroke="#9a9a9a" strokeWidth="2.500" /></svg></button>
        </DialogHead>
        <DialogBody>
          <NameRow>
            <label htmlFor="name">名称</label>
            <input id="name" defaultValue="修饰" />
            <svg width="13" height="20" viewBox="0 0 13 20" role="img" aria-label="信息"><rect width="13" height="20" rx="2" fill="#135f86" /><path d="M5 3.500h3v3H5zM4 8.500h4.500v6H10v2H3.500v-2H5v-4H4z" fill="#fff" /></svg>
          </NameRow>
          <ParamTitle>参数</ParamTitle>
          <ParamArea>
            <TableFrame>
              <ParamTable>
                <thead><tr><th>名称</th><th>值</th></tr></thead>
                <tbody>{params.map(([k, v]) => <tr key={k}><td>{k}</td><td>{v}</td></tr>)}</tbody>
              </ParamTable>
            </TableFrame>
            <SideButtons>
              <SideButton>打开...</SideButton>
              <SideButton>保存...</SideButton>
            </SideButtons>
          </ParamArea>
        </DialogBody>
      </Dialog>

      <Highlight $x={74} $y={59} $w={160} $h={85} />
      <Highlight $x={313} $y={96} $w={193} $h={63} />
    </Page>
  );
}
